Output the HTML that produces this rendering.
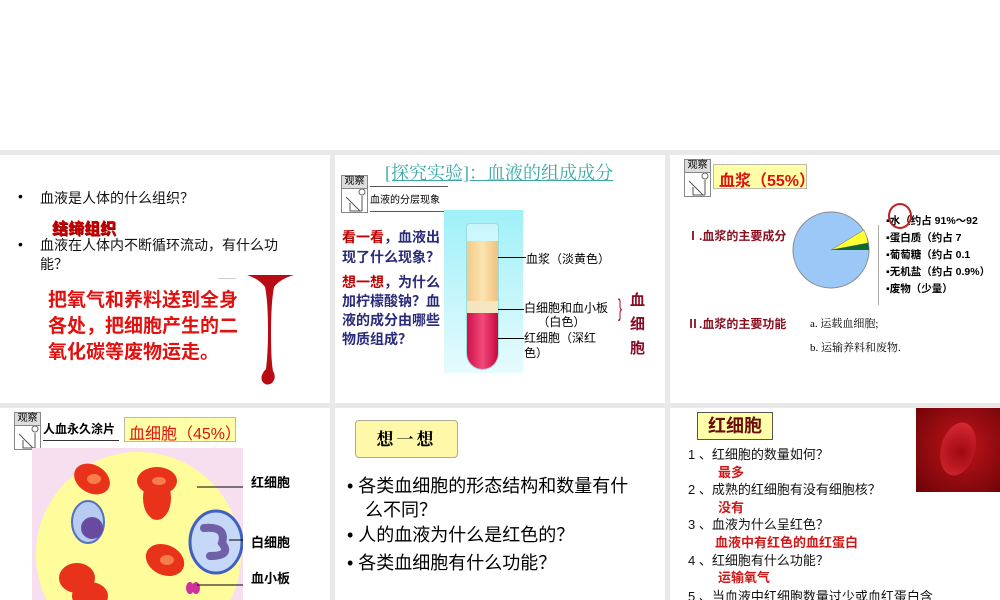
<!DOCTYPE html>
<html><head><meta charset="utf-8"><style>
*{margin:0;padding:0;box-sizing:border-box}
html,body{width:1000px;height:600px;overflow:hidden}
body{background:#fff;position:relative;font-family:"Liberation Sans","Noto Sans CJK SC",sans-serif}
.g{position:absolute;background:#e9e9e9}
.p{position:absolute;background:#fff;overflow:hidden}
.a{position:absolute;white-space:nowrap}
.obs{position:absolute;width:27px;height:38px;border:1px solid #888;background:#fff}
.obs .t{height:13px;background:#ddd;border-bottom:1px solid #888;font-size:10px;line-height:12px;text-align:center;color:#000}
.b{font-weight:bold}
</style></head><body>
<div class="g" style="left:0;top:150px;width:1000px;height:450px"></div>

<!-- Panel 1 -->
<div class="p" style="left:0;top:155px;width:330px;height:248px">
<div class="a" style="left:18px;top:33px;font-size:14px;color:#000">•</div>
<div class="a" style="left:40px;top:33px;font-size:14px;color:#111">血液是人体的什么组织？</div>
<div class="a b" style="left:52px;top:60px;font-size:16px;color:#c00;text-shadow:1px 1px 0 #800">结缔组织</div>
<div class="a" style="left:18px;top:81px;font-size:14px;color:#000">•</div>
<div class="a" style="left:40px;top:81px;font-size:14px;color:#111;line-height:19px;white-space:normal;width:265px">血液在人体内不断循环流动，有什么功能？</div>
<div class="a b" style="left:48px;top:133px;font-size:19px;line-height:26px;color:#e31010;white-space:normal;width:196px">把氧气和养料送到全身各处，把细胞产生的二氧化碳等废物运走。</div>
<svg class="a" style="left:244px;top:118px" width="52" height="116" viewBox="0 0 52 116"><path d="M3 2 H50 Q36 6 30 14 Q27 30 27 60 Q27 88 29 98 Q33 104 28 110 Q22 114 18 108 Q16 102 22 96 Q24 80 24 58 Q24 28 21 14 Q15 6 3 2Z" fill="#b80b14"/></svg>
<div class="a" style="left:218px;top:123px;width:18px;height:1px;background:#ccc"></div>
</div>

<!-- Panel 2 -->
<div class="p" style="left:335px;top:155px;width:330px;height:248px">
<div class="a" style="left:50px;top:4px;font-size:18px;color:#3aa9a6;text-decoration:underline;font-family:'Liberation Serif','Noto Serif CJK SC',serif">[探究实验]：血液的组成成分</div>
<div class="obs" style="left:6px;top:20px"><div class="t">观察</div><svg width="27" height="24"><circle cx="20" cy="3" r="3" fill="#fff" stroke="#666"/><path d="M4 8 L18 22 M8 14 V22 H20 M20 7 V22" stroke="#555" fill="none"/></svg></div>
<div class="a" style="left:35px;top:31px;width:78px;height:26px;border-bottom:1px solid #555;border-top:1px solid #555;font-size:10px;padding-top:4px">血液的分层现象</div>
<div class="a b" style="left:7px;top:72px;font-size:14px;line-height:20px;color:#2a2a7a;white-space:normal;width:102px"><span style="color:#b00">看一看</span>，血液出现了什么现象？</div>
<div class="a b" style="left:7px;top:118px;font-size:14px;line-height:19px;color:#2a2a7a;white-space:normal;width:102px"><span style="color:#b00">想一想</span>，为什么加柠檬酸钠？血液的成分由哪些物质组成？</div>
<div class="a" style="left:109px;top:55px;width:79px;height:163px;background:linear-gradient(#9ff0f8,#e6fbfd)"></div>
<div class="a" style="left:131px;top:68px;width:33px;height:147px;border:1px solid #9dd;border-radius:4px 4px 17px 17px;background:rgba(255,255,255,.4)"></div>
<div class="a" style="left:132px;top:86px;width:31px;height:60px;background:linear-gradient(90deg,#f3c98a,#fbe4b0,#f0c07e)"></div>
<div class="a" style="left:132px;top:146px;width:31px;height:12px;background:#f6e6c0"></div>
<div class="a" style="left:132px;top:158px;width:31px;height:56px;background:linear-gradient(90deg,#d0104a,#f04a7a,#c8083f);border-radius:0 0 16px 16px"></div>
<div class="a" style="left:163px;top:102px;width:28px;height:1px;background:#000"></div>
<div class="a" style="left:163px;top:154px;width:26px;height:1px;background:#000"></div>
<div class="a" style="left:163px;top:183px;width:26px;height:1px;background:#000"></div>
<div class="a" style="left:191px;top:95px;font-size:12px">血浆（淡黄色）</div>
<div class="a" style="left:189px;top:146px;font-size:12px;line-height:14px">白细胞和血小板<br>&nbsp;&nbsp;&nbsp;&nbsp;（白色）</div>
<div class="a" style="left:189px;top:176px;font-size:12px;line-height:15px">红细胞（深红<br>色）</div>
<div class="a" style="left:283px;top:140px;font-size:24px;color:#a01030;transform:scaleX(.5);transform-origin:left">}</div>
<div class="a b" style="left:295px;top:134px;font-size:15px;line-height:24px;color:#8a0b25;white-space:normal;width:18px">血细胞</div>
</div>

<!-- Panel 3 -->
<div class="p" style="left:670px;top:155px;width:330px;height:248px">
<div class="obs" style="left:14px;top:4px"><div class="t">观察</div><svg width="27" height="24"><circle cx="20" cy="3" r="3" fill="#fff" stroke="#666"/><path d="M4 8 L18 22 M8 14 V22 H20 M20 7 V22" stroke="#555" fill="none"/></svg></div>
<div class="a b" style="left:43px;top:9px;width:94px;height:25px;background:#ffffa8;border:1px solid #bba;font-size:16px;color:#e01010;padding:2px 5px">血浆（55%）</div>
<div class="a b" style="left:17px;top:72px;font-size:12px;color:#8a1020">Ⅰ.血浆的主要成分</div>
<svg class="a" style="left:121px;top:55px" width="80" height="80"><circle cx="40" cy="40" r="38" fill="#9cc8f8" stroke="#888"/><path d="M40 40 L73 20 A38 38 0 0 1 77 33Z" fill="#ff3" stroke="#666" stroke-width=".5"/><path d="M40 40 L77 33 A38 38 0 0 1 78 40Z" fill="#163"/></svg>
<div class="a" style="left:208px;top:70px;width:1px;height:80px;background:#aaa"></div>
<div class="a b" style="left:216px;top:58px;font-size:10.5px;line-height:17px">▪水（约占 91%～92<br>▪蛋白质（约占 7<br>▪葡萄糖（约占 0.1<br>▪无机盐（约占 0.9%）<br>▪废物（少量）</div>
<div class="a" style="left:218px;top:48px;width:24px;height:26px;border:2px solid #c02020;border-radius:50%"></div>
<div class="a b" style="left:17px;top:160px;font-size:12px;color:#8a1020">Ⅱ.血浆的主要功能</div>
<div class="a" style="left:140px;top:160px;font-size:11px;font-family:'Liberation Serif','Noto Serif CJK SC',serif">a. 运载血细胞;</div>
<div class="a" style="left:140px;top:184px;font-size:11px;font-family:'Liberation Serif','Noto Serif CJK SC',serif">b. 运输养料和废物.</div>
</div>

<!-- Panel 4 -->
<div class="p" style="left:0;top:408px;width:330px;height:192px">
<div class="obs" style="left:14px;top:4px"><div class="t">观察</div><svg width="27" height="24"><circle cx="20" cy="3" r="3" fill="#fff" stroke="#666"/><path d="M4 8 L18 22 M8 14 V22 H20 M20 7 V22" stroke="#555" fill="none"/></svg></div>
<div class="a b" style="left:43px;top:12px;width:76px;height:21px;border-bottom:1px solid #333;font-size:12px">人血永久涂片</div>
<div class="a" style="left:124px;top:9px;width:112px;height:25px;background:#ffffa8;border:1px solid #bba;font-size:16px;color:#e01010;padding:2px 4px">血细胞（45%）</div>
<div class="a" style="left:32px;top:40px;width:211px;height:160px;background:#f8dff0;overflow:hidden"><div style="position:absolute;left:4px;top:4px;width:205px;height:205px;border-radius:50%;background:#fffc9c"></div>
<svg style="position:absolute;left:0;top:0" width="211" height="160">
<g fill="#e8321a"><ellipse cx="60" cy="31" rx="19" ry="14" transform="rotate(30 60 31)"/><ellipse cx="125" cy="33" rx="20" ry="14"/><ellipse cx="125" cy="50" rx="14" ry="22"/><ellipse cx="133" cy="112" rx="20" ry="15" transform="rotate(25 133 112)"/><ellipse cx="45" cy="130" rx="18" ry="15"/><ellipse cx="58" cy="148" rx="18" ry="14"/></g>
<g fill="#ffb070" opacity=".6"><ellipse cx="62" cy="31" rx="7" ry="5"/><ellipse cx="127" cy="33" rx="7" ry="4"/><ellipse cx="135" cy="112" rx="7" ry="5"/></g>
<ellipse cx="56" cy="74" rx="16" ry="21" fill="#b8cbf0" stroke="#5070c0" stroke-width="2"/><circle cx="60" cy="80" r="11" fill="#6a4aa0"/>
<ellipse cx="184" cy="94" rx="26" ry="31" fill="#c5d8f8" stroke="#3f60c0" stroke-width="3"/><path d="M172 80 Q195 78 190 95 Q200 108 178 108" stroke="#7060a8" stroke-width="8" fill="none" stroke-linecap="round"/>
<ellipse cx="158" cy="140" rx="4" ry="6" fill="#d0309a"/><ellipse cx="164" cy="140" rx="4" ry="6" fill="#d0309a"/>
<path d="M165 39 H211 M197 92 H211 M165 137 H211" stroke="#000"/></svg></div>
<div class="a b" style="left:251px;top:64px;font-size:13px">红细胞</div>
<div class="a b" style="left:251px;top:124px;font-size:13px">白细胞</div>
<div class="a b" style="left:251px;top:160px;font-size:13px">血小板</div>
</div>

<!-- Panel 5 -->
<div class="p" style="left:335px;top:408px;width:330px;height:192px">
<div class="a" style="left:20px;top:12px;width:103px;height:38px;background:#fff8a8;border:1px solid #aa9;border-radius:4px;font-size:17px;font-weight:bold;text-align:center;line-height:38px;font-family:'Liberation Serif','Noto Serif CJK SC',serif;letter-spacing:3px">想一想</div>
<div class="a" style="left:12px;top:66px;font-size:18px;line-height:24px;white-space:normal;width:292px;padding-left:18px;text-indent:-18px">• 各类血细胞的形态结构和数量有什么不同？</div>
<div class="a" style="left:12px;top:113px;font-size:18px">• 人的血液为什么是红色的？</div>
<div class="a" style="left:12px;top:141px;font-size:18px">• 各类血细胞有什么功能？</div>
</div>

<!-- Panel 6 -->
<div class="p" style="left:670px;top:408px;width:330px;height:192px">
<div class="a b" style="left:27px;top:4px;width:76px;height:28px;background:#ffffa8;border:1px solid #555;font-size:18px;color:#6a0c0c;text-align:center;line-height:27px">红细胞</div>
<div class="a" style="left:246px;top:0px;width:84px;height:84px;background:radial-gradient(circle at 55% 45%,#c0141a,#6a0306)"><div style="position:absolute;left:25px;top:14px;width:34px;height:54px;border-radius:50%;background:radial-gradient(circle at 60% 55%,#a00810,#e0303a);transform:rotate(15deg)"></div></div>
<div class="a" style="font-size:13px;left:18px;top:38px;line-height:17.6px;color:#111">1 、红细胞的数量如何？<br><span class="b" style="color:#d01818;margin-left:30px">最多</span><br>2 、成熟的红细胞有没有细胞核？<br><span class="b" style="color:#d01818;margin-left:30px">没有</span><br>3 、血液为什么呈红色？<br><span class="b" style="color:#d01818;margin-left:27px">血液中有红色的血红蛋白</span><br>4 、红细胞有什么功能？<br><span class="b" style="color:#d01818;margin-left:30px">运输氧气</span></div>
<div class="a" style="font-size:13px;left:18px;top:178px;color:#111">5 、当血液中红细胞数量过少或血红蛋白含</div>
</div>
</body></html>
